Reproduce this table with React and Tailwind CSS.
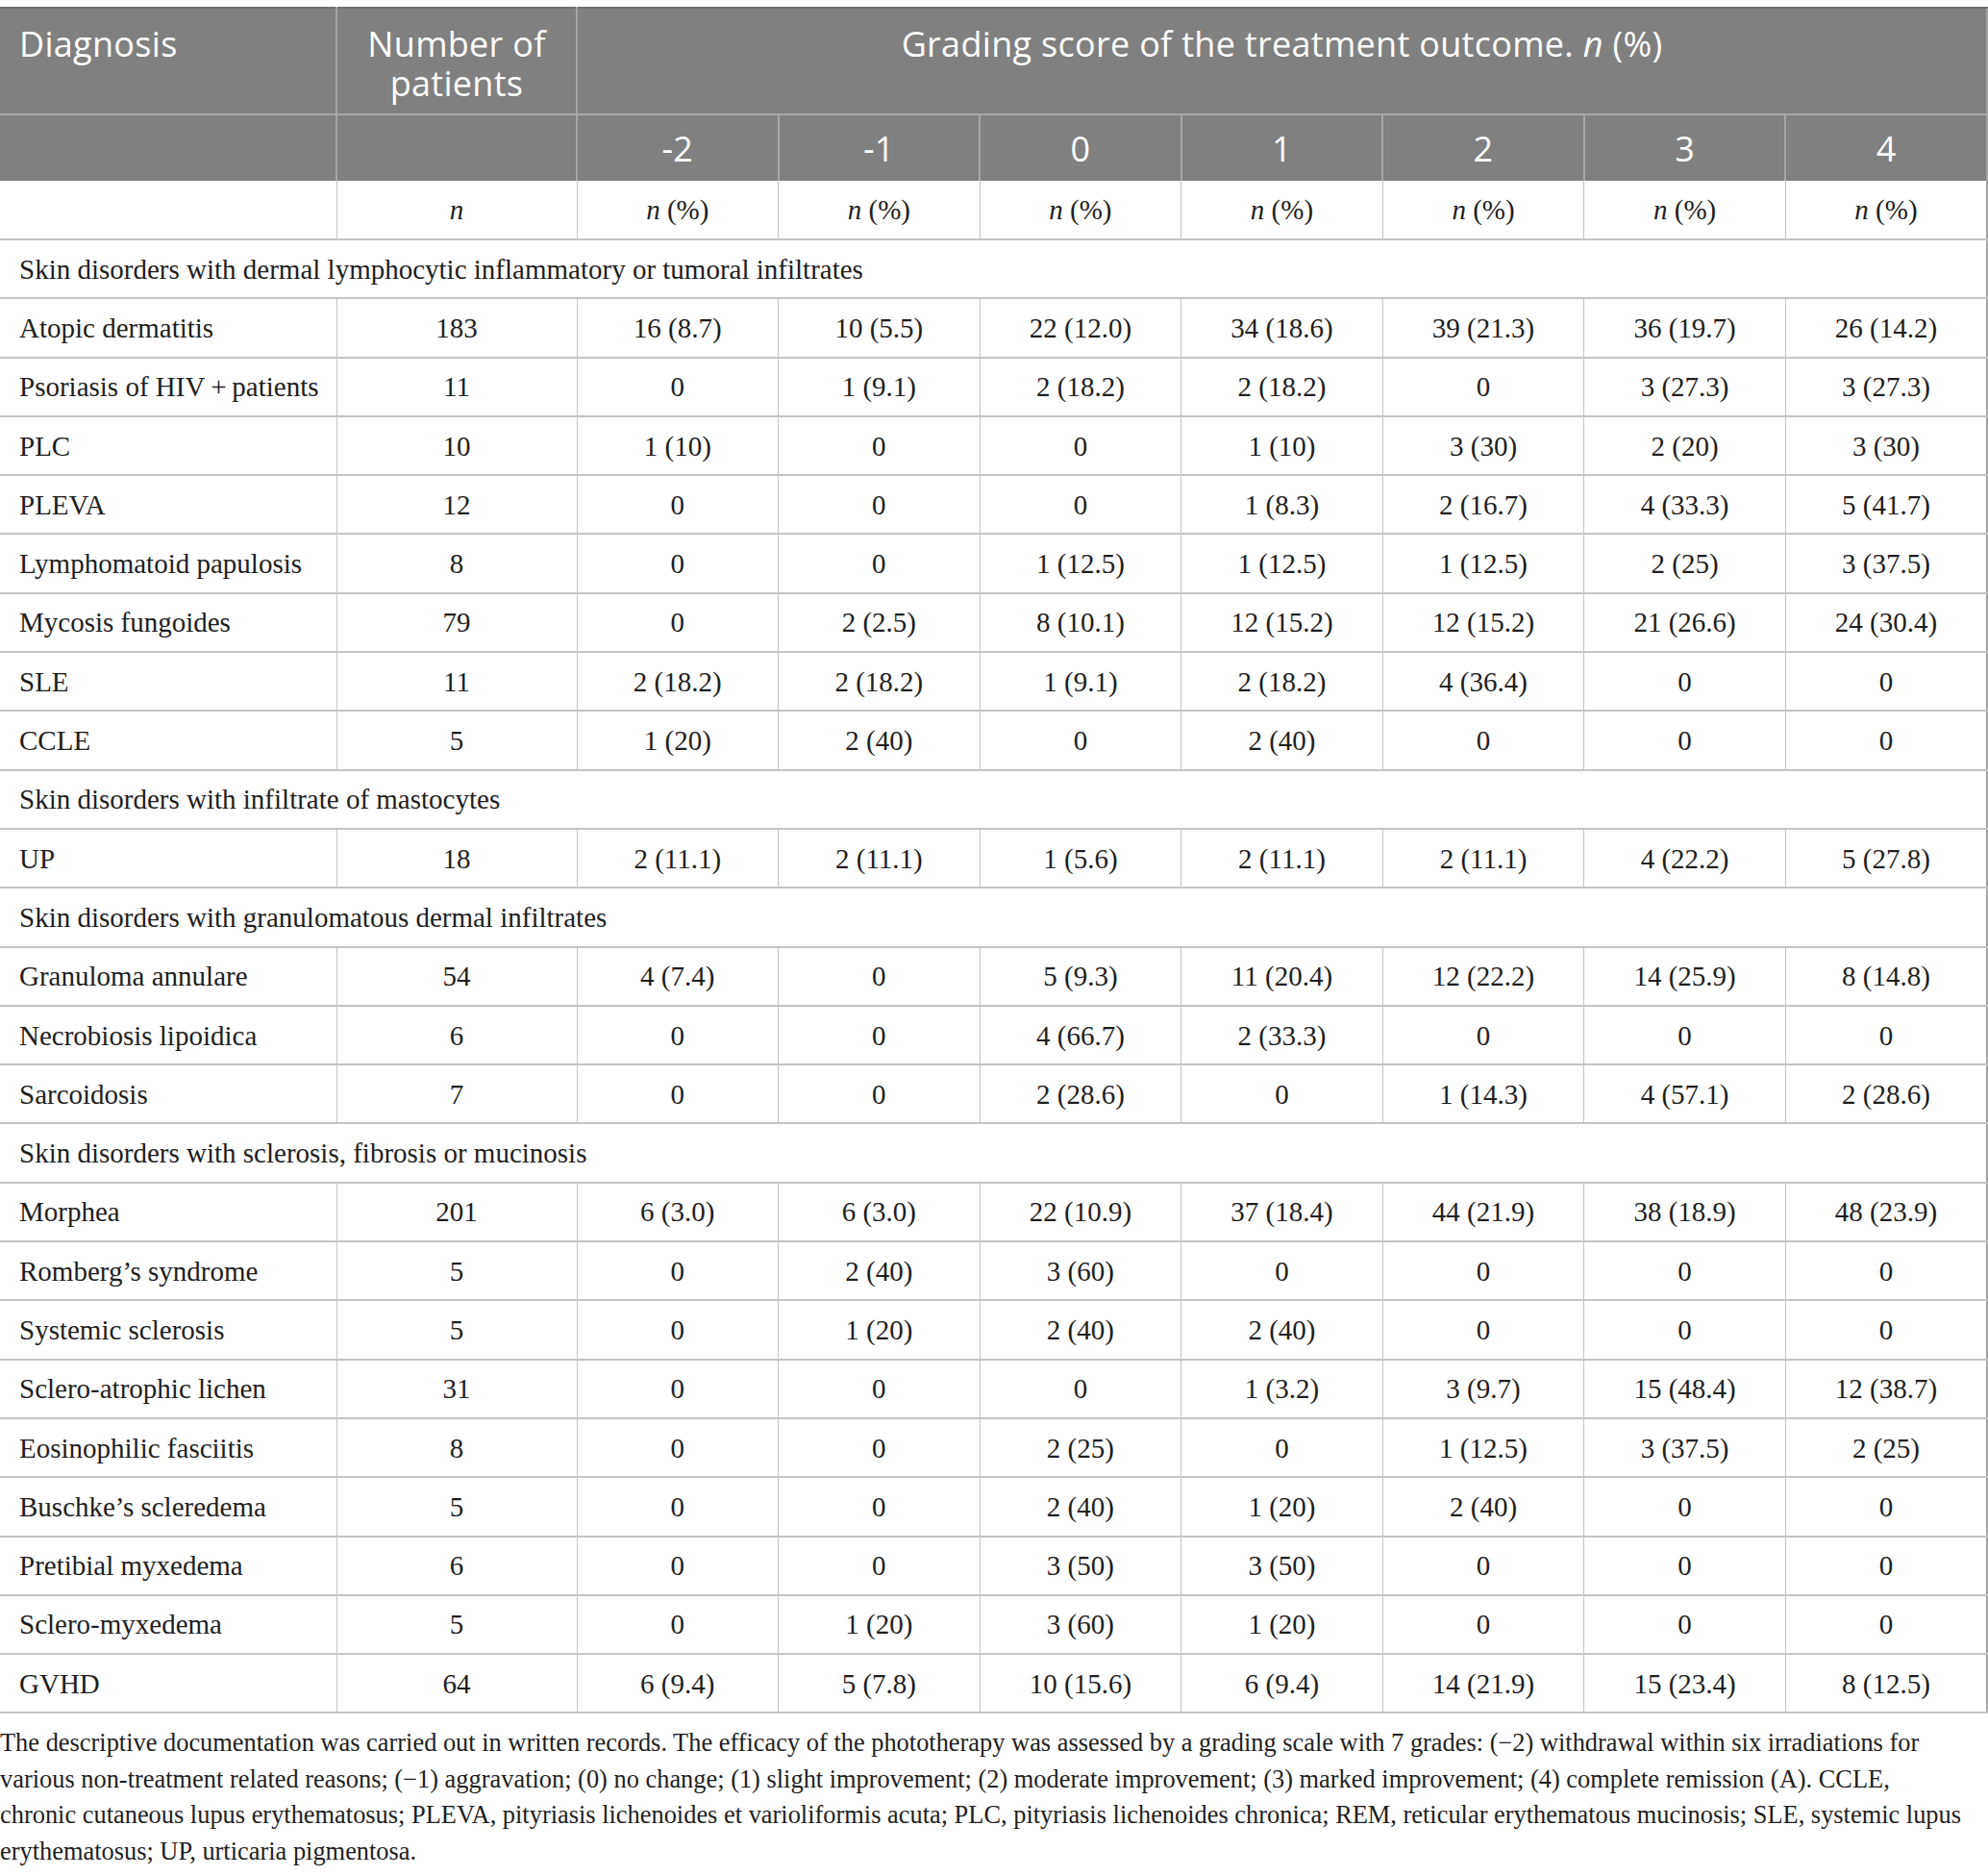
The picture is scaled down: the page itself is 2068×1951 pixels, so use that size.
import React from "react";

const rows = [
  { s: "Skin disorders with dermal lymphocytic inflammatory or tumoral infiltrates" },
  ["Atopic dermatitis", "183", "16 (8.7)", "10 (5.5)", "22 (12.0)", "34 (18.6)", "39 (21.3)", "36 (19.7)", "26 (14.2)"],
  ["Psoriasis of HIV\u2009+\u2009patients", "11", "0", "1 (9.1)", "2 (18.2)", "2 (18.2)", "0", "3 (27.3)", "3 (27.3)"],
  ["PLC", "10", "1 (10)", "0", "0", "1 (10)", "3 (30)", "2 (20)", "3 (30)"],
  ["PLEVA", "12", "0", "0", "0", "1 (8.3)", "2 (16.7)", "4 (33.3)", "5 (41.7)"],
  ["Lymphomatoid papulosis", "8", "0", "0", "1 (12.5)", "1 (12.5)", "1 (12.5)", "2 (25)", "3 (37.5)"],
  ["Mycosis fungoides", "79", "0", "2 (2.5)", "8 (10.1)", "12 (15.2)", "12 (15.2)", "21 (26.6)", "24 (30.4)"],
  ["SLE", "11", "2 (18.2)", "2 (18.2)", "1 (9.1)", "2 (18.2)", "4 (36.4)", "0", "0"],
  ["CCLE", "5", "1 (20)", "2 (40)", "0", "2 (40)", "0", "0", "0"],
  { s: "Skin disorders with infiltrate of mastocytes" },
  ["UP", "18", "2 (11.1)", "2 (11.1)", "1 (5.6)", "2 (11.1)", "2 (11.1)", "4 (22.2)", "5 (27.8)"],
  { s: "Skin disorders with granulomatous dermal infiltrates" },
  ["Granuloma annulare", "54", "4 (7.4)", "0", "5 (9.3)", "11 (20.4)", "12 (22.2)", "14 (25.9)", "8 (14.8)"],
  ["Necrobiosis lipoidica", "6", "0", "0", "4 (66.7)", "2 (33.3)", "0", "0", "0"],
  ["Sarcoidosis", "7", "0", "0", "2 (28.6)", "0", "1 (14.3)", "4 (57.1)", "2 (28.6)"],
  { s: "Skin disorders with sclerosis, fibrosis or mucinosis" },
  ["Morphea", "201", "6 (3.0)", "6 (3.0)", "22 (10.9)", "37 (18.4)", "44 (21.9)", "38 (18.9)", "48 (23.9)"],
  ["Romberg\u2019s syndrome", "5", "0", "2 (40)", "3 (60)", "0", "0", "0", "0"],
  ["Systemic sclerosis", "5", "0", "1 (20)", "2 (40)", "2 (40)", "0", "0", "0"],
  ["Sclero-atrophic lichen", "31", "0", "0", "0", "1 (3.2)", "3 (9.7)", "15 (48.4)", "12 (38.7)"],
  ["Eosinophilic fasciitis", "8", "0", "0", "2 (25)", "0", "1 (12.5)", "3 (37.5)", "2 (25)"],
  ["Buschke\u2019s scleredema", "5", "0", "0", "2 (40)", "1 (20)", "2 (40)", "0", "0"],
  ["Pretibial myxedema", "6", "0", "0", "3 (50)", "3 (50)", "0", "0", "0"],
  ["Sclero-myxedema", "5", "0", "1 (20)", "3 (60)", "1 (20)", "0", "0", "0"],
  ["GVHD", "64", "6 (9.4)", "5 (7.8)", "10 (15.6)", "6 (9.4)", "14 (21.9)", "15 (23.4)", "8 (12.5)"],
];

const grades = ["-2", "-1", "0", "1", "2", "3", "4"];

const sans = { fontFamily: '"Open Sans", "Noto Sans", sans-serif' };

const foot = [
  "The descriptive documentation was carried out in written records. The efficacy of the phototherapy was assessed by a grading scale with 7 grades: (−2) withdrawal within six irradiations for",
  "various non-treatment related reasons; (−1) aggravation; (0) no change; (1) slight improvement; (2) moderate improvement; (3) marked improvement; (4) complete remission (A). CCLE,",
  "chronic cutaneous lupus erythematosus; PLEVA, pityriasis lichenoides et varioliformis acuta; PLC, pityriasis lichenoides chronica; REM, reticular erythematous mucinosis; SLE, systemic lupus",
  "erythematosus; UP, urticaria pigmentosa.",
];

export default function App() {
  return (
    <div className="w-[2068px] bg-white pt-[7px] text-[#1e1e1e]" style={{ fontFamily: '"Liberation Serif", "Times New Roman", serif' }}>
      <table className="w-full table-fixed border-collapse border-r-2 border-b-2 border-[#a3a3a3]">
        <colgroup>
          <col className="w-[350px]" />
          <col className="w-[250px]" />
          {grades.map((g) => (
            <col key={g} />
          ))}
        </colgroup>
        <thead className="bg-[#7f807f] text-white text-[36px] leading-[41px] tracking-[0.3px]" style={sans}>
          <tr className="h-[111px] border-t-2 border-[#6f706f]">
            <th className="align-top pt-[16px] pl-[20px] text-left font-normal border-r-2 border-b-2 border-[#a6a6a6]">Diagnosis</th>
            <th className="align-top pt-[16px] text-center font-normal border-r-2 border-b-2 border-[#a6a6a6]">
              <div>Number of</div>
              <div>patients</div>
            </th>
            <th colSpan={7} className="align-top pt-[16px] text-center font-normal border-b-2 border-[#a6a6a6]">
              Grading score of the treatment outcome. <i>n</i> (%)
            </th>
          </tr>
          <tr className="h-[69px]">
            <th className="font-normal border-r-2 border-[#a6a6a6]"></th>
            <th className="font-normal border-r-2 border-[#a6a6a6]"></th>
            {grades.map((g, i) => (
              <th key={g} className={"font-normal text-center align-middle " + (i < 6 ? "border-r-2 border-[#a6a6a6]" : "")}>
                {g}
              </th>
            ))}
          </tr>
        </thead>
        <tbody className="text-[29px] leading-[32px]">
          <tr className="h-[61px]">
            <td className="border-r border-b-2 border-[#c4c4c4]"></td>
            <td className="border-r border-b-2 border-[#c4c4c4] text-center">
              <i>n</i>
            </td>
            {grades.map((g) => (
              <td key={g} className="border-r border-b-2 border-[#c4c4c4] text-center">
                <i>n</i> (%)
              </td>
            ))}
          </tr>
          {rows.map((r, idx) =>
            r.s ? (
              <tr key={idx} className="h-[61.3px]">
                <td colSpan={9} className="pl-[20px] border-b-2 border-[#c4c4c4] text-left">
                  {r.s}
                </td>
              </tr>
            ) : (
              <tr key={idx} className="h-[61.3px]">
                {r.map((c, j) => (
                  <td
                    key={j}
                    className={
                      "border-r border-b-2 border-[#c4c4c4] whitespace-nowrap " +
                      (j === 0 ? "pl-[20px] text-left" : "text-center")
                    }
                  >
                    {c}
                  </td>
                ))}
              </tr>
            )
          )}
        </tbody>
      </table>
      <div className="mt-[12px] text-[26.4px] leading-[37.5px] text-[#1e1e1e]">
        {foot.map((l, i) => (
          <div key={i} className="whitespace-nowrap">
            {l}
          </div>
        ))}
      </div>
    </div>
  );
}
